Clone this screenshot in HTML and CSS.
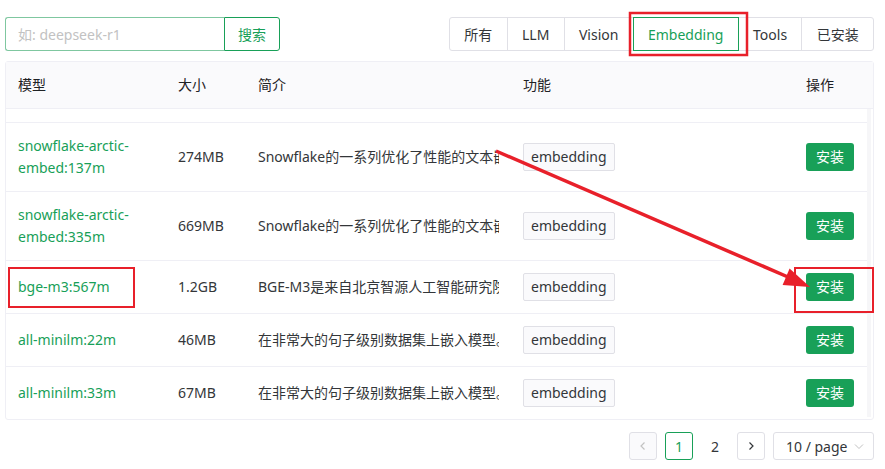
FILE: index.html
```html
<!DOCTYPE html>
<html lang="zh-CN">
<head>
  <meta charset="UTF-8">
  <meta name="viewport" content="width=device-width, initial-scale=1.0">
  <title>模型管理</title>
  <link rel="stylesheet" href="styles.css">
</head>
<body>
  <div class="page">
    <div class="toolbar">
      <div class="search">
        <input class="search-input" type="text" placeholder="如: deepseek-r1">
        <button class="search-btn">搜索</button>
      </div>
      <div class="tabs">
        <span class="tab">所有</span>
        <span class="tab">LLM</span>
        <span class="tab">Vision</span>
        <span class="tab active">Embedding</span>
        <span class="tab">Tools</span>
        <span class="tab">已安装</span>
      </div>
    </div>

    <div class="table">
      <div class="thead grid">
        <div class="cell">模型</div>
        <div class="cell">大小</div>
        <div class="cell">简介</div>
        <div class="cell">功能</div>
        <div class="cell">操作</div>
      </div>
      <div class="tbody">
        <div class="rows">
          <div class="spacer"></div>
          <div class="row grid">
            <div class="cell name">snowflake-arctic-embed:137m</div>
            <div class="cell">274MB</div>
            <div class="cell"><div class="desc">Snowflake的一系列优化了性能的文本嵌入模型。</div></div>
            <div class="cell"><span class="tag">embedding</span></div>
            <div class="cell"><button class="install">安装</button></div>
          </div>
          <div class="row grid">
            <div class="cell name">snowflake-arctic-embed:335m</div>
            <div class="cell">669MB</div>
            <div class="cell"><div class="desc">Snowflake的一系列优化了性能的文本嵌入模型。</div></div>
            <div class="cell"><span class="tag">embedding</span></div>
            <div class="cell"><button class="install">安装</button></div>
          </div>
          <div class="row grid">
            <div class="cell name">bge-m3:567m</div>
            <div class="cell">1.2GB</div>
            <div class="cell"><div class="desc">BGE-M3是来自北京智源人工智能研究院的多功能嵌入模型。</div></div>
            <div class="cell"><span class="tag">embedding</span></div>
            <div class="cell"><button class="install">安装</button></div>
          </div>
          <div class="row grid">
            <div class="cell name">all-minilm:22m</div>
            <div class="cell">46MB</div>
            <div class="cell"><div class="desc">在非常大的句子级别数据集上嵌入模型。</div></div>
            <div class="cell"><span class="tag">embedding</span></div>
            <div class="cell"><button class="install">安装</button></div>
          </div>
          <div class="row grid last">
            <div class="cell name">all-minilm:33m</div>
            <div class="cell">67MB</div>
            <div class="cell"><div class="desc">在非常大的句子级别数据集上嵌入模型。</div></div>
            <div class="cell"><span class="tag">embedding</span></div>
            <div class="cell"><button class="install">安装</button></div>
          </div>
        </div>
        <div class="scrollbar"></div>
      </div>
    </div>

    <div class="pager">
      <span class="pg disabled">
        <svg width="10" height="10" viewBox="0 0 10 10"><path d="M6.5 1.5 3 5l3.5 3.5" fill="none" stroke="currentColor" stroke-width="1.2"/></svg>
      </span>
      <span class="pg current">1</span>
      <span class="pg plain">2</span>
      <span class="pg">
        <svg width="10" height="10" viewBox="0 0 10 10"><path d="M3.5 1.5 7 5 3.5 8.5" fill="none" stroke="currentColor" stroke-width="1.2"/></svg>
      </span>
      <span class="size-select">10 / page
        <svg width="12" height="12" viewBox="0 0 12 12"><path d="M2 4.5 6 8.5 10 4.5" fill="none" stroke="#c2c2c2" stroke-width="1"/></svg>
      </span>
    </div>

    <!-- red annotation marks drawn over the screenshot -->
    <svg class="marks" width="885" height="469" viewBox="0 0 885 469">
      <rect x="630" y="13" width="117" height="42" fill="none" stroke="#e8202a" stroke-width="2.5"/>
      <rect x="9" y="268" width="125" height="39" fill="none" stroke="#e8202a" stroke-width="2"/>
      <rect x="795" y="268" width="78" height="44" fill="none" stroke="#e8202a" stroke-width="2"/>
      <line x1="496" y1="151" x2="788" y2="277" stroke="#e8202a" stroke-width="3.5"/>
      <polygon points="810,287 782.6,285.1 789.6,268.5" fill="#e8202a"/>
    </svg>
  </div>
</body>
</html>
```

FILE: styles.css
```css
* {
  box-sizing: border-box;
}
body {
  margin: 0;
  background: #fff;
  font-family: "Noto Sans", "Noto Sans CJK SC", sans-serif;
  font-size: 14px;
  color: #333639;
}
.page {
  position: relative;
  width: 885px;
  height: 469px;
  overflow: hidden;
  padding: 17px 11px 0 5px;
}
.toolbar {
  display: flex;
  justify-content: space-between;
  height: 34px;
}
.search {
  display: flex;
}
.search-input {
  width: 219px;
  height: 34px;
  border: 1px solid #7fc7a0;
  border-right: none;
  border-radius: 3px 0 0 3px;
  padding: 0 12px;
  font: inherit;
  color: #333639;
  outline: none;
}
.search-input::placeholder {
  color: #c2c2c2;
}
.search-btn {
  width: 56px;
  height: 34px;
  border: 1px solid #18a058;
  border-radius: 0 3px 3px 0;
  background: #fff;
  color: #18a058;
  font: inherit;
  padding: 0;
}
.tabs {
  display: flex;
  border: 1px solid #e0e0e6;
  border-radius: 3px;
}
.tab {
  display: flex;
  align-items: center;
  padding: 0 14.3px;
  border-left: 1px solid #e0e0e6;
}
.tab:first-child {
  border-left: none;
}
.tab.active {
  color: #18a058;
  border: 1px solid #18a058;
  margin: -1px 0;
}
.tab.active + .tab {
  border-left: none;
}
.table {
  margin-top: 10px;
  border: 1px solid #efeff5;
  border-radius: 3px;
}
.grid {
  display: grid;
  grid-template-columns: 160px 80px 265px 283px 73px;
}
.thead {
  background: #fafafc;
  border-bottom: 1px solid #efeff5;
}
.cell {
  padding: 12px;
  line-height: 22px;
  display: flex;
  align-items: center;
  min-width: 0;
}
.thead .cell {
  color: #1f2225;
}
.tbody {
  display: flex;
}
.rows {
  flex: 1;
}
.spacer {
  height: 14px;
  border-bottom: 1px solid #efeff5;
}
.row {
  border-bottom: 1px solid #efeff5;
}
.row.last {
  border-bottom: none;
}
.name {
  color: #18a058;
}
.desc {
  white-space: nowrap;
  overflow: hidden;
  width: 100%;
}
.tag {
  display: inline-flex;
  align-items: center;
  height: 28px;
  padding: 0 7px;
  background: #fafafc;
  border: 1px solid #e0e0e6;
  border-radius: 2px;
  white-space: nowrap;
}
.install {
  height: 28px;
  width: 48px;
  border: none;
  border-radius: 3px;
  background: #18a058;
  color: #fff;
  font: inherit;
  padding: 0;
}
.scrollbar {
  width: 6px;
  margin: 0 2px 2px 0;
  background: #f6f6f8;
}
.pager {
  display: flex;
  justify-content: flex-end;
  align-items: center;
  gap: 8px;
  margin-top: 12px;
}
.pg {
  display: flex;
  align-items: center;
  justify-content: center;
  width: 28px;
  height: 28px;
  border: 1px solid #e0e0e6;
  border-radius: 3px;
  color: #333639;
}
.pg.disabled {
  background: #fafafc;
  color: #c2c2c2;
}
.pg.current {
  border-color: #18a058;
  color: #18a058;
}
.pg.plain {
  border-color: transparent;
}
.size-select {
  display: flex;
  align-items: center;
  justify-content: space-between;
  width: 101px;
  height: 28px;
  padding: 0 8px 0 12px;
  border: 1px solid #e0e0e6;
  border-radius: 3px;
}
.marks {
  position: absolute;
  top: 0;
  left: 0;
  pointer-events: none;
}
```
